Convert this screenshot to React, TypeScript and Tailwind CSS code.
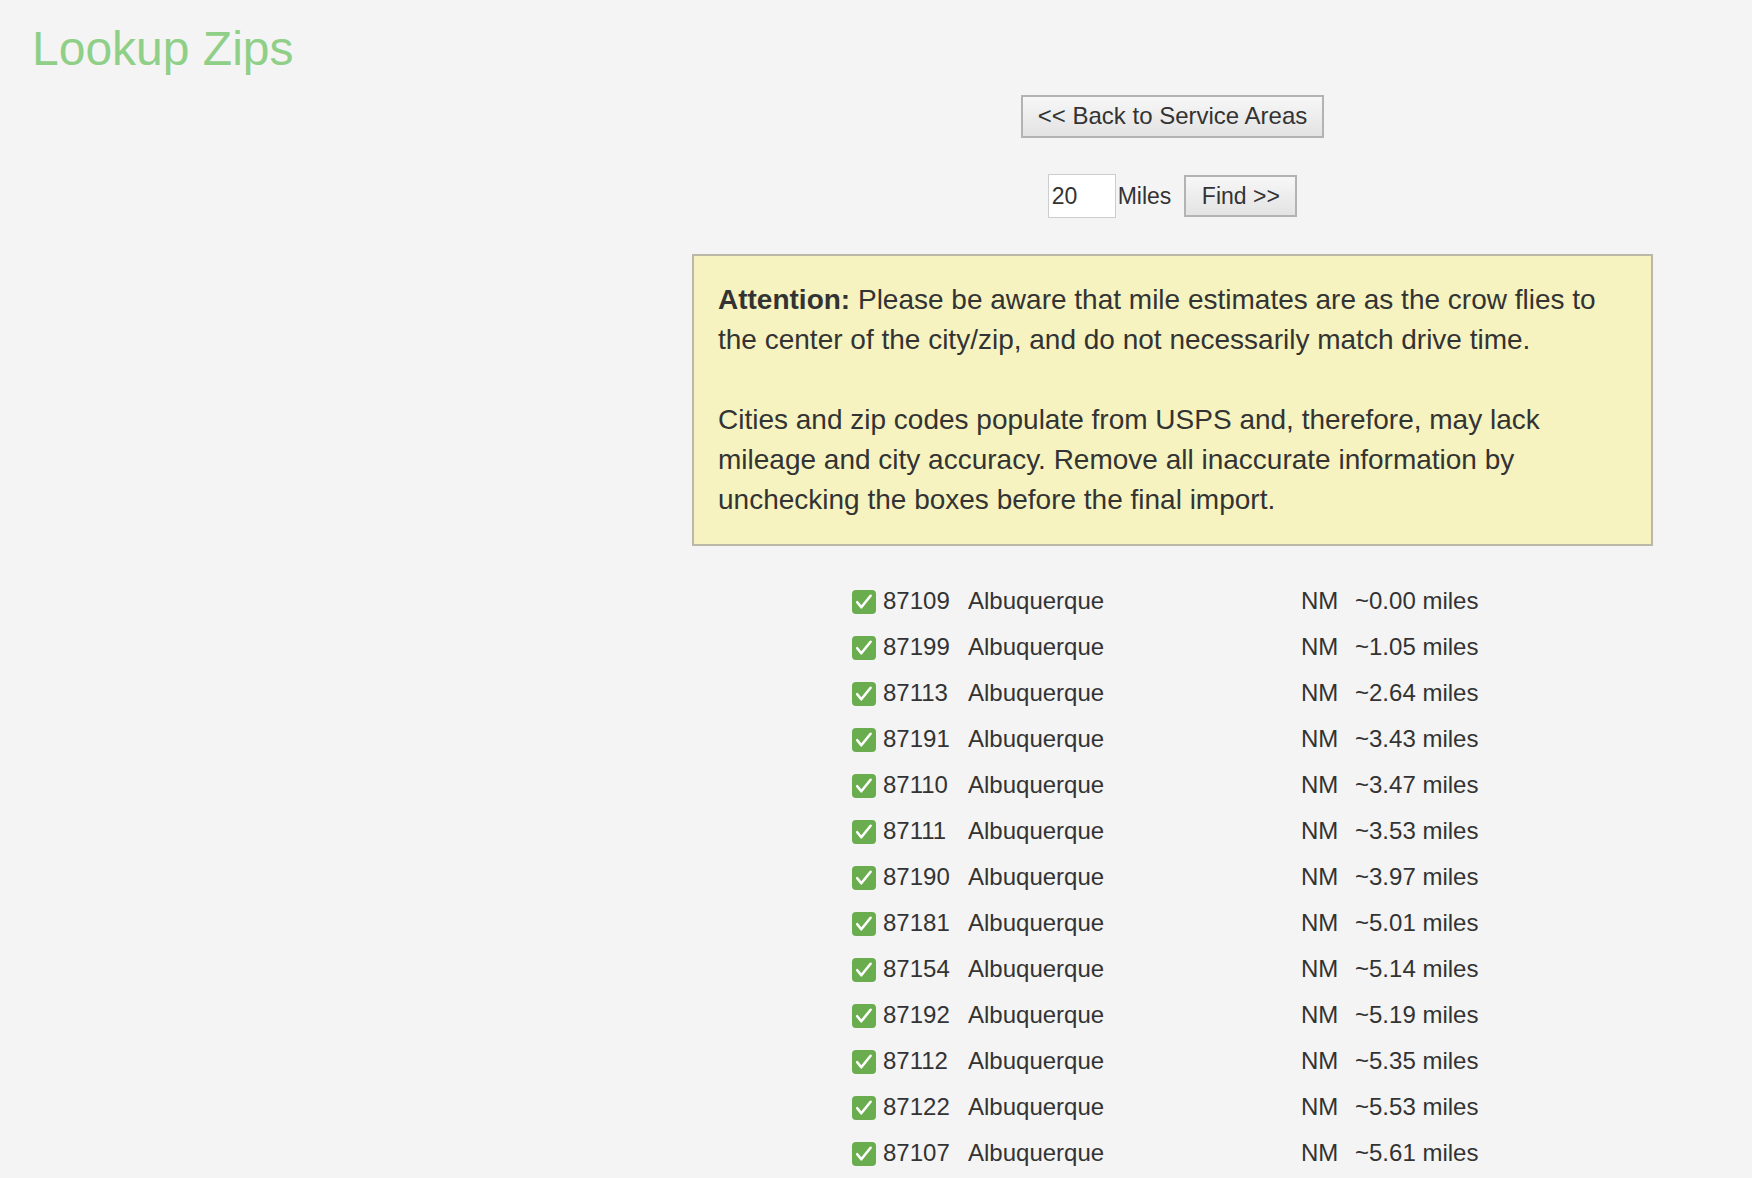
import React from "react";

const rows: [string, string][] = [
  ["87109", "0.00"],
  ["87199", "1.05"],
  ["87113", "2.64"],
  ["87191", "3.43"],
  ["87110", "3.47"],
  ["87111", "3.53"],
  ["87190", "3.97"],
  ["87181", "5.01"],
  ["87154", "5.14"],
  ["87192", "5.19"],
  ["87112", "5.35"],
  ["87122", "5.53"],
  ["87107", "5.61"],
];

function Check() {
  return (
    <svg width="24" height="24" viewBox="0 0 24 24" className="block">
      <rect x="0" y="0" width="24" height="24" rx="4" fill="#6aad4e" />
      <path d="M5.2 12.2 L9.3 17.3 L18.6 5.8" fill="none" stroke="#ffffff" strokeWidth="2.6" strokeLinecap="round" strokeLinejoin="round" />
    </svg>
  );
}

export default function App() {
  return (
    <div className="min-h-screen bg-[#f4f4f4] font-['Liberation_Sans',Arial,Helvetica,sans-serif] text-[#333333]">
      <h1 className="pl-[32px] pt-[21px] text-[48px] leading-[55px] text-[#8fcf88]">Lookup Zips</h1>
      <div className="ml-[692px] mt-[19px] flex w-[961px] flex-col items-center">
        <button className="h-[43px] w-[303px] border-2 border-[#b3b3b3] bg-gradient-to-b from-[#f7f7f7] to-[#e3e3e3] pb-[2px] text-[24px] leading-none text-[#333333]">
          &lt;&lt; Back to Service Areas
        </button>
        <div className="mt-[36px] flex h-[44px] items-center">
          <input
            readOnly
            value="20"
            className="h-[44px] w-[68px] border border-[#cdcdcd] bg-white px-[3px] text-[23px] text-[#333333] outline-none"
          />
          <span className="ml-[2px] text-[23px]">Miles</span>
          <button className="ml-[13px] h-[42px] w-[113px] border-2 border-[#b3b3b3] bg-gradient-to-b from-[#f7f7f7] to-[#e3e3e3] text-[23px] leading-none text-[#333333]">
            Find &gt;&gt;
          </button>
        </div>
        <div className="mt-[36px] w-full border-2 border-[#bbb8a8] bg-[#f6f3c0] p-[24px] text-[28px] leading-[40px]">
          <p>
            <b className="font-bold">Attention:</b> Please be aware that mile estimates are as the crow flies to the center of the city/zip, and do not necessarily match drive time.
          </p>
          <p className="mt-[40px]">
            Cities and zip codes populate from USPS and, therefore, may lack mileage and city accuracy. Remove all inaccurate information by unchecking the boxes before the final import.
          </p>
        </div>
        <div className="ml-[160px] mt-[32px] self-start">
          {rows.map(([zip, miles]) => (
            <div key={zip} className="grid h-[46px] grid-cols-[31px_85px_333px_54px_auto] items-center text-[24px] leading-none">
              <div className="pt-[2px]">
                <Check />
              </div>
              <span>{zip}</span>
              <span>Albuquerque</span>
              <span>NM</span>
              <span>~{miles} miles</span>
            </div>
          ))}
        </div>
      </div>
    </div>
  );
}
